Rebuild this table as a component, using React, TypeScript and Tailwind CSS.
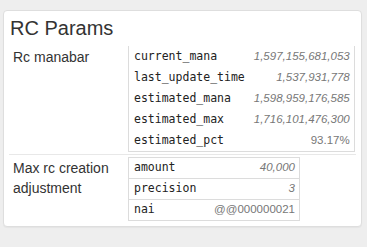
import React from "react";

type Val = string | number;

const manabar: [string, Val][] = [
  ["current_mana", 1597155681053],
  ["last_update_time", 1537931778],
  ["estimated_mana", 1598959176585],
  ["estimated_max", 1716101476300],
  ["estimated_pct", "93.17%"],
];

const adjustment: [string, Val][] = [
  ["amount", 40000],
  ["precision", 3],
  ["nai", "@@000000021"],
];

function ValueCell({ v }: { v: Val }) {
  if (typeof v === "number") {
    return <i>{v.toLocaleString("en-US")}</i>;
  }
  return <span>{v}</span>;
}

function KvTable({ rows, lined }: { rows: [string, Val][]; lined?: boolean }) {
  return (
    <table
      className={
        lined
          ? "w-[172px] border-collapse border border-[#dcdcdc]"
          : "border-collapse border-x border-b border-[#dcdcdc]"
      }
    >
      <tbody>
        {rows.map(([k, v]) => (
          <tr key={k} className={lined ? "border-b border-[#dcdcdc] last:border-b-0" : ""}>
            <td className="h-[21px] pl-[5px] pr-[5px] align-middle font-['DejaVu_Sans_Mono',monospace] text-[11.5px] text-[#222]">
              {k}
            </td>
            <td className="h-[21px] pl-[4px] pr-[4px] text-right align-middle font-['Liberation_Sans',Arial,sans-serif] text-[11.5px] text-[#777]">
              <ValueCell v={v} />
            </td>
          </tr>
        ))}
      </tbody>
    </table>
  );
}

function ParamRow({ label, children, last }: { label: string; children: React.ReactNode; last?: boolean }) {
  return (
    <div className={last ? "flex pt-[2px]" : "flex border-b border-[#e8e8e8] pt-[2px] pb-[2px]"}>
      <div className="w-[119px] shrink-0 pl-[4px] pr-2 pt-[1px] text-[14px] leading-[20px] text-[#333]">
        {label}
      </div>
      <div>{children}</div>
    </div>
  );
}

export default function App() {
  return (
    <div className="min-h-[247px] bg-[#eeeeee] pl-[3px] pr-[5px] pt-[10px] font-['Liberation_Sans',Arial,sans-serif]">
      <div className="h-[217px] w-[359px] rounded-[4px] border border-[#dedede] bg-white px-[5px] shadow-[0_1px_1px_rgba(0,0,0,0.04)]">
        <h2 className="pl-[1px] pt-[6px] pb-[5px] text-[20px] leading-[22px] text-[#333]">RC Params</h2>
        <ParamRow label="Rc manabar">
          <KvTable rows={manabar} />
        </ParamRow>
        <ParamRow label="Max rc creation adjustment" last>
          <KvTable rows={adjustment} lined />
        </ParamRow>
      </div>
    </div>
  );
}
